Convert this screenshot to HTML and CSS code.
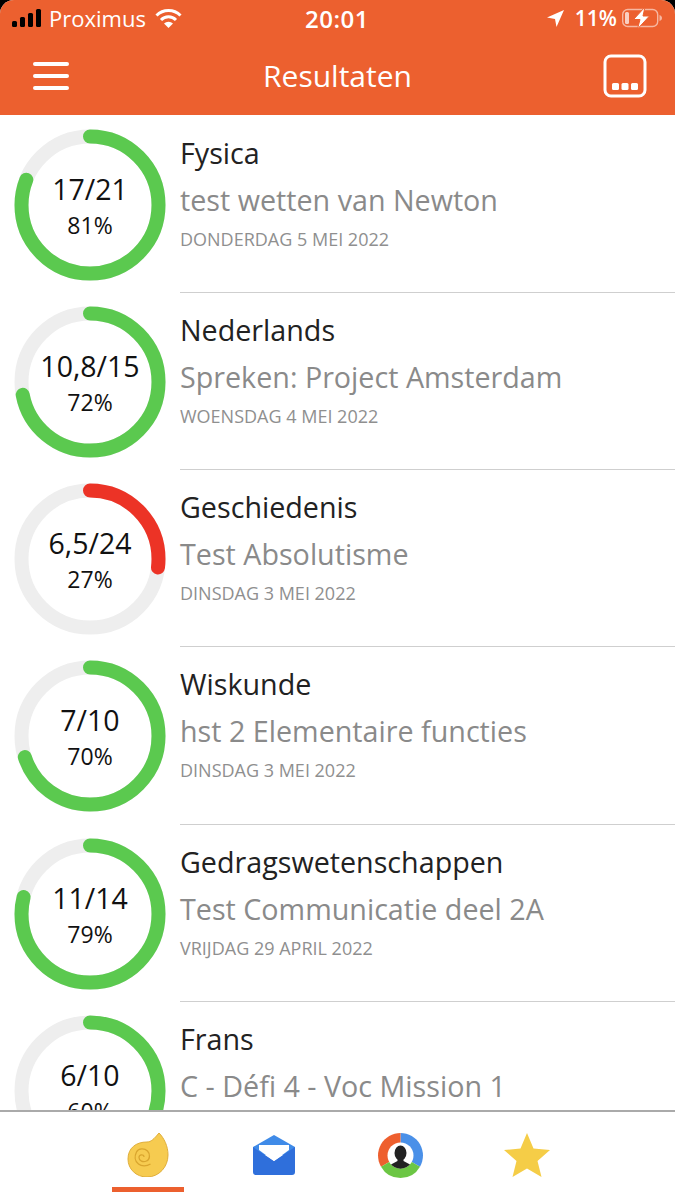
FILE: index.html
```html
<!DOCTYPE html>
<html>
<head>
    <title>Resultaten</title>
    <link rel="stylesheet" href="styles.css">
</head>
<body>
    <div class="app">
        <header class="top">
            <div class="status">
                <div class="status-left">
                    <svg class="signal" width="30" height="18" viewBox="0 0 30 18">
                        <rect x="0" y="12" width="5" height="6" rx="1.5"/>
                        <rect x="8" y="8" width="5" height="10" rx="1.5"/>
                        <rect x="16" y="4" width="5" height="14" rx="1.5"/>
                        <rect x="24" y="0" width="5" height="18" rx="1.5"/>
                    </svg>
                    <span class="carrier">Proximus</span>
                    <svg class="wifi" width="27" height="19" viewBox="0 0 27 19">
                        <path d="M1.500 6.500a17 17 0 0 1 24 0" fill="none" stroke="#fff" stroke-width="3"/>
                        <path d="M6 11a10.500 10.500 0 0 1 15 0" fill="none" stroke="#fff" stroke-width="3"/>
                        <path d="M13.500 19l-4.500-4.500a6.400 6.400 0 0 1 9 0z" fill="#fff"/>
                    </svg>
                </div>
                <div class="clock">20:01</div>
                <div class="status-right">
                    <svg width="17" height="17" viewBox="0 0 17 17">
                        <path d="M17 0L9.500 17 8 9 0 7.500z" fill="#fff"/>
                    </svg>
                    <span class="pct">11%</span>
                    <svg class="battery" width="40" height="22" viewBox="0 0 40 22">
                        <rect x="0.700" y="2.500" width="35" height="17" rx="5" fill="none" stroke="#fff" stroke-opacity="0.55" stroke-width="1.400"/>
                        <rect x="3" y="5" width="4" height="12" rx="1.500" fill="#fff" fill-opacity="0.7"/>
                        <path d="M37.500 8v6c1.500-.5 2.500-1.500 2.500-3s-1-2.500-2.500-3z" fill="#fff" fill-opacity="0.55"/>
                        <path d="M23 0L11.500 12.500h6.500L15.500 22 27.500 9h-6.500z" fill="#fff" stroke="#ec602f" stroke-width="1"/>
                    </svg>
                </div>
            </div>
            <nav class="nav">
                <div class="burger"><span></span><span></span><span></span></div>
                <h1 class="nav-title">Resultaten</h1>
                <svg class="nav-action" width="44" height="44" viewBox="0 0 44 44">
                    <rect x="2" y="2" width="40" height="40" rx="6" fill="none" stroke="#fff" stroke-width="3"/>
                    <rect x="9" y="29" width="7" height="7" rx="1.500" fill="#fff"/>
                    <rect x="18.500" y="29" width="7" height="7" rx="1.500" fill="#fff"/>
                    <rect x="28" y="29" width="7" height="7" rx="1.500" fill="#fff"/>
                </svg>
            </nav>
        </header>

        <main class="list">
            <div class="row">
                <div class="ring">
                    <svg width="152" height="152" viewBox="0 0 152 152">
                        <circle class="ring-bg" cx="76" cy="76" r="68.500"/>
                        <circle class="ring-val good" cx="76" cy="76" r="68.500" pathLength="100" stroke-dasharray="81 100" transform="rotate(-90 76 76)"/>
                    </svg>
                    <div class="ring-text"><div class="score">17/21</div><div class="perc">81%</div></div>
                </div>
                <div class="info">
                    <div class="subject">Fysica</div>
                    <div class="test">test wetten van Newton</div>
                    <div class="date">DONDERDAG 5 MEI 2022</div>
                </div>
            </div>
            <div class="row">
                <div class="ring">
                    <svg width="152" height="152" viewBox="0 0 152 152">
                        <circle class="ring-bg" cx="76" cy="76" r="68.500"/>
                        <circle class="ring-val good" cx="76" cy="76" r="68.500" pathLength="100" stroke-dasharray="72 100" transform="rotate(-90 76 76)"/>
                    </svg>
                    <div class="ring-text"><div class="score">10,8/15</div><div class="perc">72%</div></div>
                </div>
                <div class="info">
                    <div class="subject">Nederlands</div>
                    <div class="test">Spreken: Project Amsterdam</div>
                    <div class="date">WOENSDAG 4 MEI 2022</div>
                </div>
            </div>
            <div class="row">
                <div class="ring">
                    <svg width="152" height="152" viewBox="0 0 152 152">
                        <circle class="ring-bg" cx="76" cy="76" r="68.500"/>
                        <circle class="ring-val bad" cx="76" cy="76" r="68.500" pathLength="100" stroke-dasharray="27 100" transform="rotate(-90 76 76)"/>
                    </svg>
                    <div class="ring-text"><div class="score">6,5/24</div><div class="perc">27%</div></div>
                </div>
                <div class="info">
                    <div class="subject">Geschiedenis</div>
                    <div class="test">Test Absolutisme</div>
                    <div class="date">DINSDAG 3 MEI 2022</div>
                </div>
            </div>
            <div class="row">
                <div class="ring">
                    <svg width="152" height="152" viewBox="0 0 152 152">
                        <circle class="ring-bg" cx="76" cy="76" r="68.500"/>
                        <circle class="ring-val good" cx="76" cy="76" r="68.500" pathLength="100" stroke-dasharray="70 100" transform="rotate(-90 76 76)"/>
                    </svg>
                    <div class="ring-text"><div class="score">7/10</div><div class="perc">70%</div></div>
                </div>
                <div class="info">
                    <div class="subject">Wiskunde</div>
                    <div class="test">hst 2 Elementaire functies</div>
                    <div class="date">DINSDAG 3 MEI 2022</div>
                </div>
            </div>
            <div class="row">
                <div class="ring">
                    <svg width="152" height="152" viewBox="0 0 152 152">
                        <circle class="ring-bg" cx="76" cy="76" r="68.500"/>
                        <circle class="ring-val good" cx="76" cy="76" r="68.500" pathLength="100" stroke-dasharray="79 100" transform="rotate(-90 76 76)"/>
                    </svg>
                    <div class="ring-text"><div class="score">11/14</div><div class="perc">79%</div></div>
                </div>
                <div class="info">
                    <div class="subject">Gedragswetenschappen</div>
                    <div class="test">Test Communicatie deel 2A</div>
                    <div class="date">VRIJDAG 29 APRIL 2022</div>
                </div>
            </div>
            <div class="row">
                <div class="ring">
                    <svg width="152" height="152" viewBox="0 0 152 152">
                        <circle class="ring-bg" cx="76" cy="76" r="68.500"/>
                        <circle class="ring-val good" cx="76" cy="76" r="68.500" pathLength="100" stroke-dasharray="60 100" transform="rotate(-90 76 76)"/>
                    </svg>
                    <div class="ring-text"><div class="score">6/10</div><div class="perc">60%</div></div>
                </div>
                <div class="info">
                    <div class="subject">Frans</div>
                    <div class="test">C - Défi 4 - Voc Mission 1</div>
                </div>
            </div>
        </main>

        <footer class="tabs">
            <div class="tab active">
                <svg width="42" height="44" viewBox="0 0 42 44">
                    <path d="M32 0c5 5 9 13 9 22 0 12-9 22-21 22C9 44 1 36 1 26 1 15 9 9 20 9c4 0 7-3 12-9z" fill="#f6cb50" stroke="#e0ae3a" stroke-width="1"/>
                    <path d="M17 24c0-3-5-3-5 .5s4 5 7.500 3.500 4-7 1-10-9-3-11 1-2 9 2 12c3 2.500 8 2.500 12 0" fill="none" stroke="#d9a52e" stroke-width="1.300"/>
                </svg>
            </div>
            <div class="tab">
                <svg width="42" height="40" viewBox="0 0 42 40">
                    <path d="M0 12L21 0l21 12v8H0z" fill="#3f8be8"/>
                    <path d="M0 12l21 14 21-14v25a3 3 0 0 1-3 3H3a3 3 0 0 1-3-3z" fill="#2f6fdb"/>
                    <path d="M6 10h30v5L21 26 6 15z" fill="#fff"/>
                </svg>
            </div>
            <div class="tab">
                <svg width="45" height="45" viewBox="0 0 45 45">
                    <path d="M22.500 0a22.500 22.500 0 0 1 19.500 33.700L22.500 22.500z" fill="#4a90e8"/>
                    <path d="M22.500 0a22.500 22.500 0 0 0-19.500 33.700L22.500 22.500z" fill="#ee5f2e"/>
                    <path d="M3 33.700a22.500 22.500 0 0 0 39 0L22.500 22.500z" fill="#6cc644"/>
                    <circle cx="22.500" cy="22.500" r="13" fill="#fff"/>
                    <ellipse cx="22.500" cy="20" rx="6" ry="7.500" fill="#222"/>
                    <path d="M19.500 25v3l-6.500 3.500a13 13 0 0 0 19 0L25.500 28v-3z" fill="#222"/>
                </svg>
            </div>
            <div class="tab">
                <svg width="46" height="44" viewBox="0 0 46 44">
                    <path d="M23 0l6.500 15.500L46 17 33.500 28l4 16L23 35.500 8.500 44l4-16L0 17l16.500-1.500z" fill="#f5cd47"/>
                </svg>
            </div>
        </footer>
    </div>
</body>
</html>
```

FILE: styles.css
```css
* {
    box-sizing: border-box;
}

body {
    margin: 0;
    background: #000;
    font-family: "Open Sans", "Liberation Sans", sans-serif;
}

.app {
    width: 675px;
    height: 1200px;
    display: flex;
    flex-direction: column;
    overflow: hidden;
    background: #fff;
    border-radius: 14px 14px 0 0;
}

.top {
    height: 115px;
    flex-shrink: 0;
    background: #ec602f;
    color: #fff;
}

.status {
    height: 36px;
    padding: 0 13px 0 12px;
    display: flex;
    align-items: center;
    justify-content: space-between;
}

.status-left {
    width: 220px;
    display: flex;
    align-items: center;
}

.carrier {
    margin-left: 7px;
    margin-right: 9px;
    font-size: 22px;
}

.clock {
    font-size: 24px;
    font-weight: 600;
    letter-spacing: 0.5px;
}

.status-right {
    width: 220px;
    display: flex;
    align-items: center;
    justify-content: flex-end;
}

.pct {
    margin-left: 11px;
    margin-right: 5px;
    font-size: 21px;
    font-weight: 600;
}

.nav {
    height: 79px;
    padding: 0 28px 0 33px;
    display: flex;
    align-items: center;
    justify-content: space-between;
}

.burger {
    width: 36px;
    display: flex;
    flex-direction: column;
    gap: 8px;
}

.burger span {
    height: 4px;
    background: #fff;
    border-radius: 2px;
}

.nav-title {
    margin: 0 0 0 3px;
    font-size: 30px;
    font-weight: 500;
    line-height: 36px;
}

.list {
    flex: 1;
    overflow: hidden;
    padding-top: 1px;
}

.row {
    height: 177.150px;
    display: flex;
}

.ring {
    width: 152px;
    height: 152px;
    margin: 13px 14px 0 14px;
    flex-shrink: 0;
    display: grid;
}

.ring svg, .ring-text {
    grid-area: 1 / 1;
}

.ring-bg, .ring-val {
    fill: none;
    stroke-width: 14;
}

.ring-bg {
    stroke: #eeeeee;
}

.ring-val {
    stroke-linecap: round;
}

.good {
    stroke: #5bc94f;
}

.bad {
    stroke: #ec3326;
}

.ring-text {
    display: flex;
    flex-direction: column;
    align-items: center;
    justify-content: center;
    color: #111;
}

.score {
    font-size: 28.500px;
    line-height: 38px;
}

.perc {
    margin-top: 2px;
    font-size: 23px;
    line-height: 30px;
}

.info {
    flex: 1;
    padding-top: 18px;
    border-bottom: 1px solid #cfcfcf;
}

.subject {
    font-size: 28.700px;
    line-height: 38px;
    color: #222;
}

.test {
    margin-top: 9px;
    font-size: 28.700px;
    line-height: 38px;
    color: #8a8a8a;
}

.date {
    margin-top: 8px;
    font-size: 18px;
    line-height: 24px;
    color: #8f8f8f;
}

.tabs {
    height: 90px;
    flex-shrink: 0;
    background: #fff;
    border-top: 2px solid #aaaaaa;
    display: flex;
    justify-content: center;
}

.tab {
    width: 126.500px;
    height: 86px;
    display: flex;
    align-items: center;
    justify-content: center;
    position: relative;
}

.tab.active::after {
    content: "";
    position: absolute;
    left: 27px;
    bottom: 6px;
    width: 72px;
    height: 5px;
    background: #ec602f;
}
```
